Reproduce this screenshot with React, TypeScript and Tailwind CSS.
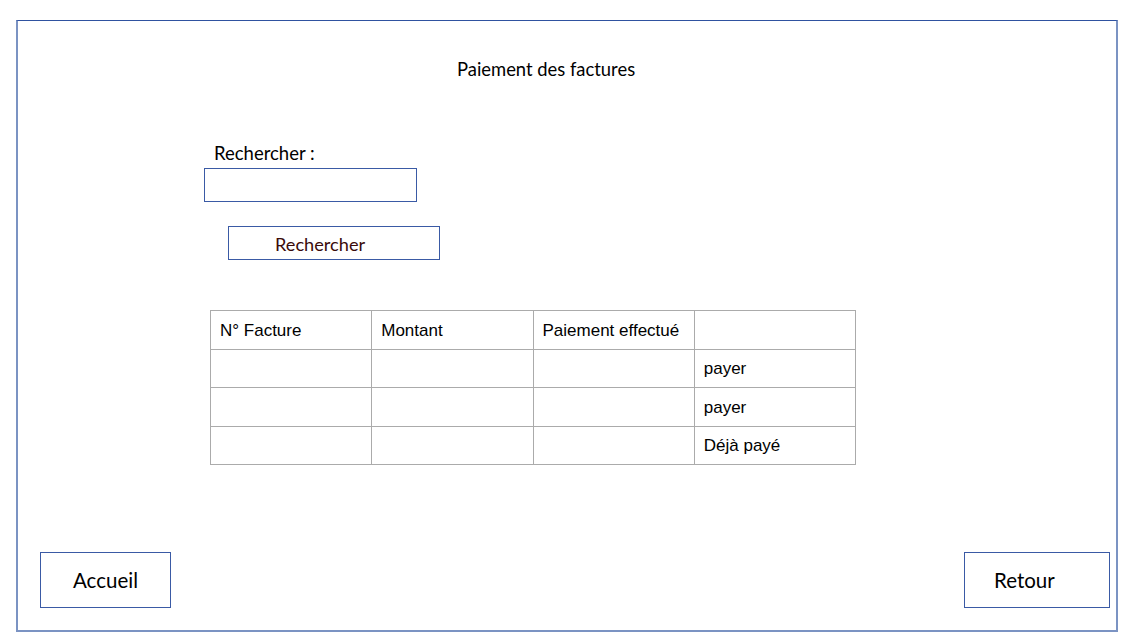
import React from "react";

const cal = { fontFamily: "Lato, 'Open Sans', sans-serif" };
const ari = { fontFamily: "'Liberation Sans', Arial, sans-serif" };

export default function App() {
  const rows = [
    ["N° Facture", "Montant", "Paiement effectué", ""],
    ["", "", "", "payer"],
    ["", "", "", "payer"],
    ["", "", "", "Déjà payé"],
  ];
  return (
    <div className="w-[1137px] h-[639px] bg-white pt-[20px] pl-[16px]">
      <div className="w-[1102px] h-[612px] border-t border-t-[#2f52a0] border-l-2 border-r-2 border-b-2 border-l-[#7b93c3] border-r-[#7b93c3] border-b-[#7b93c3] flex flex-col items-start">
        <div className="mt-[37px] h-[22px] pl-[439px] text-[18.4px] leading-[22px] text-black" style={cal}>
          Paiement des factures
        </div>
        <div className="mt-[62px] h-[22px] pl-[196px] text-[18.5px] leading-[22px] text-black" style={cal}>
          Rechercher :
        </div>
        <div className="mt-[4px] ml-[186px] w-[213px] h-[34px] border border-[#3a5aa5]" />
        <div
          className="mt-[24px] ml-[210px] w-[212px] h-[34px] border border-[#3a5aa5] flex items-center pl-[46px] pt-[3px] text-[18.2px] text-[#3a0b0b]"
          style={cal}
        >
          Rechercher
        </div>
        <table className="mt-[50px] ml-[192px] w-[646px] table-fixed border-collapse text-[17px] text-black" style={ari}>
          <tbody>
            {rows.map((r, i) => (
              <tr key={i} className="h-[38.5px]">
                {r.map((c, j) => (
                  <td key={j} className="w-[161px] border border-[#ababab] pl-[9px] pt-[1px] align-middle">
                    {c}
                  </td>
                ))}
              </tr>
            ))}
          </tbody>
        </table>
        <div className="flex-1" />
        <div className="self-stretch flex justify-between pl-[22px] pr-[6px] pb-[22px]">
          <div
            className="w-[131px] h-[56px] border border-[#3a5aa5] flex items-center justify-center text-[20.5px] text-black"
            style={cal}
          >
            Accueil
          </div>
          <div
            className="w-[146px] h-[56px] border border-[#3a5aa5] flex items-center pl-[29px] text-[20.5px] text-black"
            style={cal}
          >
            Retour
          </div>
        </div>
      </div>
    </div>
  );
}
